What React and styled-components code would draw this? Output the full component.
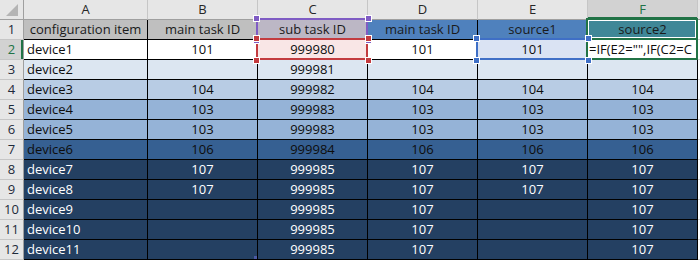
import React from "react";
import styled, { createGlobalStyle } from "styled-components";

const Global = createGlobalStyle`
  html, body { margin: 0; padding: 0; background: #ffffff; }
  body { font-family: "Open Sans", "Liberation Sans", sans-serif; }
`;

const Sheet = styled.div`
  display: grid;
  grid-template-columns: 24px 124px repeat(5, 110px) 1fr;
  grid-auto-rows: 20px;
  width: 700px;
  height: 260px;
  overflow: hidden;
  font-size: 13px;
  position: relative;
`;

const Corner = styled.div`
  background: #e6e6e6;
  border-right: 1px solid #9f9f9f;
  border-bottom: 1px solid #9f9f9f;
  box-sizing: border-box;
  display: flex;
  svg { display: block; }
`;

const ColHead = styled.div`
  box-sizing: border-box;
  background: ${(p) => (p.$active ? "#d2d2d2" : "#e6e6e6")};
  color: ${(p) => (p.$active ? "#217346" : "#262626")};
  border-right: 1px solid #c6c6c6;
  border-bottom: 1px solid #9f9f9f;
  box-shadow: ${(p) => (p.$active ? "inset 0 -2px 0 #217346" : "none")};
  text-align: center;
  line-height: 19px;
`;

const RowHead = styled.div`
  box-sizing: border-box;
  background: ${(p) => (p.$active ? "#d2d2d2" : "#e6e6e6")};
  color: ${(p) => (p.$active ? "#217346" : "#1e2a3a")};
  border-right: 1px solid #9f9f9f;
  border-bottom: 1px solid #c6c6c6;
  box-shadow: ${(p) => (p.$active ? "inset -2px 0 0 #217346" : "none")};
  text-align: center;
  line-height: 19px;
`;

const Cell = styled.div`
  position: relative;
  box-sizing: border-box;
  background: ${(p) => p.$bg};
  color: ${(p) => p.$fg};
  border-right: 1px solid #000;
  border-bottom: 1px solid #000;
  text-align: ${(p) => p.$align};
  line-height: 19px;
  white-space: nowrap;
`;

const Text = styled.span`
  display: block;
  overflow: hidden;
  padding: 0 ${(p) => (p.$tight ? "1px" : "3px")};
`;

const Rest = styled.div`
  background: #ffffff;
  border-bottom: 1px solid #d4d4d4;
`;

const RestHead = styled.div`
  background: #e6e6e6;
  border-bottom: 1px solid #9f9f9f;
`;

const RefBox = styled.div`
  position: absolute;
  top: -2px;
  left: -2px;
  right: -1px;
  bottom: -1px;
  border: 2px solid ${(p) => p.$color};
  box-shadow: ${(p) => (p.$inner ? "inset 0 0 0 1px #ffffff" : "none")};
  pointer-events: none;
  z-index: ${(p) => p.$z || 2};
`;

const Handle = styled.div`
  position: absolute;
  width: 5px;
  height: 5px;
  background: ${(p) => p.$color};
  box-shadow: 0 0 0 1px #ffffff;
  z-index: 4;
  ${(p) => (p.$top ? "top: -4px;" : "bottom: -4px;")}
  ${(p) => (p.$left ? "left: -4px;" : "right: -4px;")}
`;

const Marker = styled.div`
  position: absolute;
  right: 0;
  bottom: 0;
  width: 3px;
  height: 3px;
  background: #4b5aa5;
  z-index: 3;
`;

const ROW_BG = {
  2: "#ffffff",
  3: "#dce6f1",
  4: "#b8cce4",
  5: "#95b3d7",
  6: "#95b3d7",
  7: "#366092",
  8: "#244062",
  9: "#244062",
  10: "#244062",
  11: "#244062",
  12: "#244062",
};

const ROW_FG = (r) => (r >= 8 ? "#ffffff" : "#0d0d0d");

const data = [
  ["device1", "101", "999980", "101", "101", '=IF(E2="",IF(C2=C'],
  ["device2", "", "999981", "", "", ""],
  ["device3", "104", "999982", "104", "104", "104"],
  ["device4", "103", "999983", "103", "103", "103"],
  ["device5", "103", "999983", "103", "103", "103"],
  ["device6", "106", "999984", "106", "106", "106"],
  ["device7", "107", "999985", "107", "107", "107"],
  ["device8", "107", "999985", "107", "107", "107"],
  ["device9", "", "999985", "107", "", "107"],
  ["device10", "", "999985", "107", "", "107"],
  ["device11", "", "999985", "107", "", "107"],
];

const headers = [
  { text: "configuration item", bg: "#bfbfbf" },
  { text: "main task ID", bg: "#bfbfbf" },
  { text: "sub task ID", bg: "#bcb7c5", ref: "#7f5cc4" },
  { text: "main task ID", bg: "#4f81bd" },
  { text: "source1", bg: "#4f81bd" },
  { text: "source2", bg: "#3f8797", ref: "#217346", inner: true },
];

const letters = ["A", "B", "C", "D", "E", "F"];

const Handles = ({ color }) => (
  <>
    <Handle $color={color} $top $left />
    <Handle $color={color} $top />
    <Handle $color={color} $left />
    <Handle $color={color} />
  </>
);

export default function App() {
  return (
    <>
      <Global />
      <Sheet>
        <Corner>
          <svg width="23" height="19" viewBox="0 0 23 19">
            <polygon points="6,16 18,16 18,4" fill="#b4b4b4" />
          </svg>
        </Corner>
        {letters.map((l) => (
          <ColHead key={l} $active={l === "F"}>
            {l}
          </ColHead>
        ))}
        <RestHead />

        <RowHead>1</RowHead>
        {headers.map((h, i) => (
          <Cell key={i} $bg={h.bg} $fg="#1a1a1a" $align="center">
            <Text>{h.text}</Text>
            {h.ref && <RefBox $color={h.ref} $inner={h.inner} />}
            {i === 2 && <Handles color="#7f5cc4" />}
          </Cell>
        ))}
        <Rest />

        {data.map((row, ri) => {
          const r = ri + 2;
          return (
            <React.Fragment key={r}>
              <RowHead $active={r === 2}>{r}</RowHead>
              {row.map((v, ci) => {
                let bg = ROW_BG[r];
                let ref = null;
                if (r === 2 && ci === 2) {
                  bg = "#f9e6e6";
                  ref = "#c33b3f";
                }
                if (r === 2 && ci === 4) {
                  bg = "#dae3f3";
                  ref = "#3f6fc6";
                }
                const active = r === 2 && ci === 5;
                return (
                  <Cell
                    key={ci}
                    $bg={bg}
                    $fg={ROW_FG(r)}
                    $align={ci === 0 || active ? "left" : "center"}
                  >
                    <Text $tight={active}>{v}</Text>
                    {ref && <RefBox $color={ref} />}
                    {ref && <Handles color={ref} />}
                    {active && <RefBox $color="#217346" $z={3} />}
                    {r === 12 && ci === 1 && <Marker />}
                  </Cell>
                );
              })}
              <Rest />
            </React.Fragment>
          );
        })}
      </Sheet>
    </>
  );
}
